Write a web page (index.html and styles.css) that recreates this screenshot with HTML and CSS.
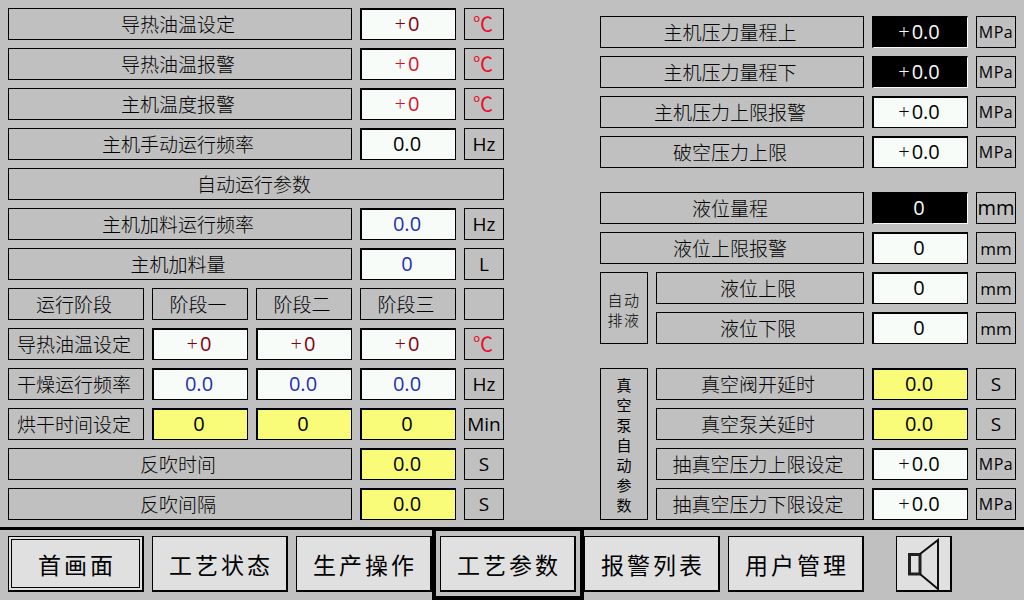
FILE: index.html
```html
<!DOCTYPE html>
<html lang="zh">
<head>
<meta charset="utf-8">
<title>工艺参数</title>
<link rel="stylesheet" href="styles.css">
</head>
<body>
<main class="main">
  <section class="col left">
    <div class="row"><div class="box grow">导热油温设定</div><div class="val dark"><span class="plus">+</span>0</div><div class="box unit red-t">℃</div></div>
    <div class="row"><div class="box grow">导热油温报警</div><div class="val red"><span class="plus">+</span>0</div><div class="box unit red-t">℃</div></div>
    <div class="row"><div class="box grow">主机温度报警</div><div class="val red"><span class="plus">+</span>0</div><div class="box unit red-t">℃</div></div>
    <div class="row"><div class="box grow">主机手动运行频率</div><div class="val">0.0</div><div class="box unit">Hz</div></div>
    <div class="row"><div class="box grow">自动运行参数</div></div>
    <div class="row"><div class="box grow">主机加料运行频率</div><div class="val blue">0.0</div><div class="box unit">Hz</div></div>
    <div class="row"><div class="box grow">主机加料量</div><div class="val blue">0</div><div class="box unit">L</div></div>
    <div class="row"><div class="box grow">运行阶段</div><div class="box cell">阶段一</div><div class="box cell">阶段二</div><div class="box cell">阶段三</div><div class="box unit"></div></div>
    <div class="row"><div class="box grow">导热油温设定</div><div class="val dark"><span class="plus">+</span>0</div><div class="val dark"><span class="plus">+</span>0</div><div class="val dark"><span class="plus">+</span>0</div><div class="box unit red-t">℃</div></div>
    <div class="row"><div class="box grow">干燥运行频率</div><div class="val blue">0.0</div><div class="val blue">0.0</div><div class="val blue">0.0</div><div class="box unit">Hz</div></div>
    <div class="row"><div class="box grow">烘干时间设定</div><div class="val yellow">0</div><div class="val yellow">0</div><div class="val yellow">0</div><div class="box unit">Min</div></div>
    <div class="row"><div class="box grow">反吹时间</div><div class="val yellow">0.0</div><div class="box unit">S</div></div>
    <div class="row"><div class="box grow">反吹间隔</div><div class="val yellow">0.0</div><div class="box unit">S</div></div>
  </section>
  <section class="col right">
    <div class="group">
      <div class="row"><div class="box grow">主机压力量程上</div><div class="val black"><span class="plus">+</span>0.0</div><div class="box unit small">MPa</div></div>
      <div class="row"><div class="box grow">主机压力量程下</div><div class="val black"><span class="plus">+</span>0.0</div><div class="box unit small">MPa</div></div>
      <div class="row"><div class="box grow">主机压力上限报警</div><div class="val"><span class="plus">+</span>0.0</div><div class="box unit small">MPa</div></div>
      <div class="row"><div class="box grow">破空压力上限</div><div class="val"><span class="plus">+</span>0.0</div><div class="box unit small">MPa</div></div>
    </div>
    <div class="group">
      <div class="row"><div class="box grow">液位量程</div><div class="val black">0</div><div class="box unit wide">mm</div></div>
      <div class="row"><div class="box grow">液位上限报警</div><div class="val">0</div><div class="box unit mm">mm</div></div>
      <div class="nested">
        <div class="box side">自动<br>排液</div>
        <div class="stack">
          <div class="row"><div class="box grow">液位上限</div><div class="val">0</div><div class="box unit mm">mm</div></div>
          <div class="row"><div class="box grow">液位下限</div><div class="val">0</div><div class="box unit mm">mm</div></div>
        </div>
      </div>
    </div>
    <div class="group">
      <div class="nested">
        <div class="box side vert">真<br>空<br>泵<br>自<br>动<br>参<br>数</div>
        <div class="stack">
          <div class="row"><div class="box grow">真空阀开延时</div><div class="val yellow">0.0</div><div class="box unit">S</div></div>
          <div class="row"><div class="box grow">真空泵关延时</div><div class="val yellow">0.0</div><div class="box unit">S</div></div>
          <div class="row"><div class="box grow">抽真空压力上限设定</div><div class="val"><span class="plus">+</span>0.0</div><div class="box unit small">MPa</div></div>
          <div class="row"><div class="box grow">抽真空压力下限设定</div><div class="val"><span class="plus">+</span>0.0</div><div class="box unit small">MPa</div></div>
        </div>
      </div>
    </div>
  </section>
</main>
<nav class="nav">
  <button class="btn home"><span class="home-in">首画面</span></button>
  <button class="btn">工艺状态</button>
  <button class="btn">生产操作</button>
  <div class="frame"><button class="btn">工艺参数</button></div>
  <button class="btn">报警列表</button>
  <button class="btn">用户管理</button>
  <button class="btn sound" aria-label="声音">
    <svg class="spk" width="33" height="52" viewBox="0 0 33 52">
      <path d="M2.500 16.500H13V36H2.500Z" fill="none" stroke="#202020" stroke-width="3"/>
      <path d="M13 16L31 2V51L13 36" fill="none" stroke="#101010" stroke-width="2"/>
    </svg>
  </button>
</nav>
</body>
</html>
```
FILE: styles.css
```css
* { box-sizing: border-box; }
html, body { margin: 0; padding: 0; }
body {
  width: 1024px; height: 600px; overflow: hidden;
  background: #c0c0c0; color: #000;
  font-family: "Noto Sans CJK SC", "DejaVu Sans", sans-serif;
  display: flex; flex-direction: column;
}
.main { height: 527px; padding: 8px 8px 0; display: flex; justify-content: space-between; }
.col { display: flex; flex-direction: column; }
.left { width: 496px; gap: 8px; }
.right { width: 416px; padding-top: 8px; gap: 24px; }
.group, .stack { display: flex; flex-direction: column; gap: 8px; }
.stack { flex: 1; }
.row { display: flex; gap: 8px; height: 32px; }
.nested { display: flex; gap: 8px; }
.box {
  border: 1px solid #000; display: flex; align-items: center; justify-content: center;
  padding: 0 4px 2px 0;
  font-size: 19px; font-weight: 300; color: #000; line-height: 1; white-space: nowrap;
}
.grow { flex: 1; min-width: 0; }
.cell { width: 96px; }
.unit { width: 40px; padding: 0; font-family: "Open Sans", sans-serif; font-weight: 400; font-size: 19px; color: #000; }
.small { font-size: 16px; letter-spacing: 0.5px; }
.wide { font-size: 20px; }
.mm { font-size: 17px; }
.red-t { color: #e8102c; font-family: "Noto Sans CJK SC", sans-serif; font-weight: 400; font-size: 20px; padding-right: 2px; }
.side { width: 48px; padding: 17px 0 0; display: block; text-align: center; font-size: 15px; letter-spacing: 1.500px; line-height: 20px; }
.vert { letter-spacing: 0; padding-top: 6px; font-weight: 400; }
.val {
  width: 96px; background: #f8fcf8;
  border: 1px solid #000; border-top-width: 2px; border-left-width: 2px;
  padding: 0 3px 2px 0;
  display: flex; align-items: center; justify-content: center;
  font-family: "Open Sans", sans-serif; font-size: 20px; color: #000;
}
.plus { font-weight: 300; margin-right: 2px; }
.red { color: #d8102c; }
.dark { color: #800010; }
.blue { color: #2030b8; }
.yellow { background: #f8fc78; }
.black { background: #000; color: #f8fcf8; border-color: #000 #f8fcf8 #f8fcf8 #000; border-width: 2px 1px 1px 2px; }
.nav {
  flex: 1; border-top: 3px solid #000; display: flex; align-items: flex-start;
  padding: 6px 0 0 8px; gap: 8px;
}
.btn {
  width: 136px; height: 56px; background: #e0e0e0; border: 1px solid #000; border-bottom-width: 2px; border-right-width: 2px;
  padding: 0 0 0 3px; margin: 0;
  font-family: "Noto Sans CJK SC", sans-serif; font-size: 23px; font-weight: 400; letter-spacing: 3px; color: #000;
  display: flex; align-items: center; justify-content: center;
}
.home { padding: 2px; }
.home-in { width: 100%; height: 100%; border: 1px solid #000; display: flex; align-items: center; justify-content: center; letter-spacing: 3px; padding-left: 3px; }
.frame { margin: -9px -8px 0; padding: 5px 4px 4px; border: 4px solid #000; height: 73px; }
.sound { width: 56px; margin-left: 24px; padding: 0; }
.spk { display: block; }
```
